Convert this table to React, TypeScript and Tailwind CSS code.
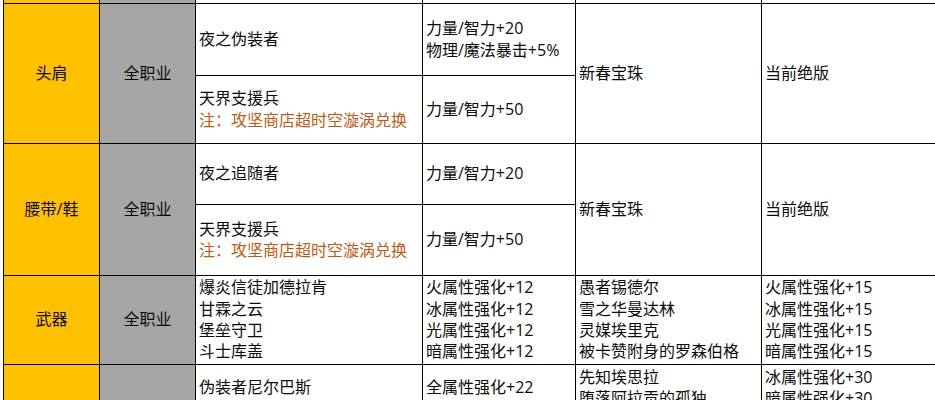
import React from 'react';

const FONT = '"Open Sans", "Noto Sans CJK SC", "Noto Sans", sans-serif';

const cellBase = 'border border-black px-[3px] py-0 align-middle leading-[21.4px]';
const yellowCell = `${cellBase} bg-[#ffc000] text-center`;
const grayCell = `${cellBase} bg-[#a6a6a6] text-center`;
const whiteCell = `${cellBase} bg-white text-left`;

function Lines({ items, note }: { items: string[]; note?: string }) {
  return (
    <>
      {items.map((t, i) => (
        <div key={i} className="whitespace-nowrap">
          {t}
        </div>
      ))}
      {note && <div className="whitespace-nowrap text-[#c65911]">{note}</div>}
    </>
  );
}

export default function App() {
  return (
    <div className="h-[400px] w-[935px] overflow-hidden bg-white" style={{ fontFamily: FONT }}>
      <table className="ml-[3px] mt-[-27px] w-[948px] table-fixed border-collapse text-[16px] text-[#0c0c0c]">
        <colgroup>
          <col className="w-[96px]" />
          <col className="w-[96px]" />
          <col className="w-[227px]" />
          <col className="w-[153px]" />
          <col className="w-[186px]" />
          <col className="w-[190px]" />
        </colgroup>
        <tbody>
          {/* row continuing from above */}
          <tr className="h-[30px]">
            <td className={yellowCell}></td>
            <td className={grayCell}></td>
            <td className={whiteCell}></td>
            <td className={whiteCell}></td>
            <td className={whiteCell}></td>
            <td className={whiteCell}></td>
          </tr>

          {/* 头肩 */}
          <tr className="h-[72px]">
            <td rowSpan={2} className={yellowCell}>头肩</td>
            <td rowSpan={2} className={grayCell}>全职业</td>
            <td className={whiteCell}>
              <Lines items={['夜之伪装者']} />
            </td>
            <td className={whiteCell}>
              <Lines items={['力量/智力+20', '物理/魔法暴击+5%']} />
            </td>
            <td rowSpan={2} className={whiteCell}>新春宝珠</td>
            <td rowSpan={2} className={whiteCell}>当前绝版</td>
          </tr>
          <tr className="h-[68px]">
            <td className={whiteCell}>
              <Lines items={['天界支援兵']} note="注：攻坚商店超时空漩涡兑换" />
            </td>
            <td className={whiteCell}>
              <Lines items={['力量/智力+50']} />
            </td>
          </tr>

          {/* 腰带/鞋 */}
          <tr className="h-[61px]">
            <td rowSpan={2} className={yellowCell}>腰带/鞋</td>
            <td rowSpan={2} className={grayCell}>全职业</td>
            <td className={whiteCell}>
              <Lines items={['夜之追随者']} />
            </td>
            <td className={whiteCell}>
              <Lines items={['力量/智力+20']} />
            </td>
            <td rowSpan={2} className={whiteCell}>新春宝珠</td>
            <td rowSpan={2} className={whiteCell}>当前绝版</td>
          </tr>
          <tr className="h-[71px]">
            <td className={whiteCell}>
              <Lines items={['天界支援兵']} note="注：攻坚商店超时空漩涡兑换" />
            </td>
            <td className={whiteCell}>
              <Lines items={['力量/智力+50']} />
            </td>
          </tr>

          {/* 武器 */}
          <tr className="h-[89px]">
            <td className={yellowCell}>武器</td>
            <td className={grayCell}>全职业</td>
            <td className={whiteCell}>
              <Lines items={['爆炎信徒加德拉肯', '甘霖之云', '堡垒守卫', '斗士库盖']} />
            </td>
            <td className={whiteCell}>
              <Lines items={['火属性强化+12', '冰属性强化+12', '光属性强化+12', '暗属性强化+12']} />
            </td>
            <td className={whiteCell}>
              <Lines items={['愚者锡德尔', '雪之华曼达林', '灵媒埃里克', '被卡赞附身的罗森伯格']} />
            </td>
            <td className={whiteCell}>
              <Lines items={['火属性强化+15', '冰属性强化+15', '光属性强化+15', '暗属性强化+15']} />
            </td>
          </tr>

          {/* 首饰 */}
          <tr className="h-[47px]">
            <td rowSpan={2} className={yellowCell}>首饰</td>
            <td rowSpan={2} className={grayCell}>全职业</td>
            <td className={whiteCell}>
              <Lines items={['伪装者尼尔巴斯']} />
            </td>
            <td className={whiteCell}>
              <Lines items={['全属性强化+22']} />
            </td>
            <td className={whiteCell}>
              <Lines items={['先知埃思拉', '堕落阿拉贡的孤独']} />
            </td>
            <td className={whiteCell}>
              <Lines items={['冰属性强化+30', '暗属性强化+30']} />
            </td>
          </tr>
          <tr className="h-[64px]">
            <td className={whiteCell}>
              <Lines items={['天界支援兵']} />
            </td>
            <td className={whiteCell}>
              <Lines items={['力量/智力+50']} />
            </td>
            <td className={whiteCell}>新春宝珠</td>
            <td className={whiteCell}>当前绝版</td>
          </tr>
        </tbody>
      </table>
    </div>
  );
}
